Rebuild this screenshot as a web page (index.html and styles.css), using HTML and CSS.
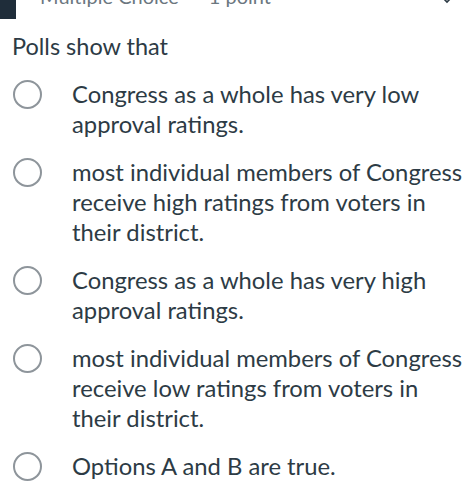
FILE: index.html
```html
<!DOCTYPE html>
<html>
<head>
<meta charset="utf-8">
<link rel="stylesheet" href="styles.css">
</head>
<body>
<div class="page">
  <div class="header">
    <div class="marker"></div>
    <div class="meta"><span>Multiple Choice</span><span class="pts">1 point</span></div>
    <svg class="chev" width="18" height="12" viewBox="0 0 18 12"><polyline points="2,2 9,9 16,2" fill="none" stroke="#2d3b45" stroke-width="1.6"/></svg>
  </div>
  <div class="question">Polls show that</div>
  <ul class="options">
    <li class="option"><span class="radio"></span><span class="label">Congress as a whole has very low approval ratings.</span></li>
    <li class="option"><span class="radio"></span><span class="label">most individual members of Congress receive high ratings from voters in their district.</span></li>
    <li class="option"><span class="radio"></span><span class="label">Congress as a whole has very high approval ratings.</span></li>
    <li class="option"><span class="radio"></span><span class="label">most individual members of Congress receive low ratings from voters in their district.</span></li>
    <li class="option"><span class="radio"></span><span class="label">Options A and B are true.</span></li>
  </ul>
</div>
</body>
</html>
```
FILE: styles.css
```css
html, body {
  margin: 0;
  padding: 0;
  background: #ffffff;
}
body {
  font-family: Lato, "Open Sans", sans-serif;
  color: #2d3b45;
  overflow: hidden;
}
.page {
  padding: 0 6px 0 0;
}
.header {
  display: flex;
  align-items: flex-start;
  height: 33px;
  margin-top: -14px;
}
.marker {
  width: 16px;
  height: 33px;
  background: #1f2d3a;
  flex: none;
}
.meta {
  margin-left: 24px;
  font-size: 20px;
  line-height: 20px;
  color: #6b7780;
  display: flex;
  gap: 30px;
}
.chev {
  margin-left: auto;
  margin-right: 12px;
  margin-top: 7px;
}
.question {
  margin: 12px 0 0 12px;
  font-size: 23.5px;
  line-height: 30px;
}
.options {
  list-style: none;
  margin: 18px 0 0 0;
  padding: 0;
  display: flex;
  flex-direction: column;
  gap: 18px;
}
.option {
  display: flex;
  align-items: flex-start;
  padding-left: 13px;
}
.radio {
  flex: none;
  width: 25px;
  height: 25px;
  border: 2px solid #8e959b;
  border-radius: 50%;
  margin-top: 1px;
}
.label {
  margin-left: 30px;
  font-size: 23.8px;
  line-height: 30px;
}
```
